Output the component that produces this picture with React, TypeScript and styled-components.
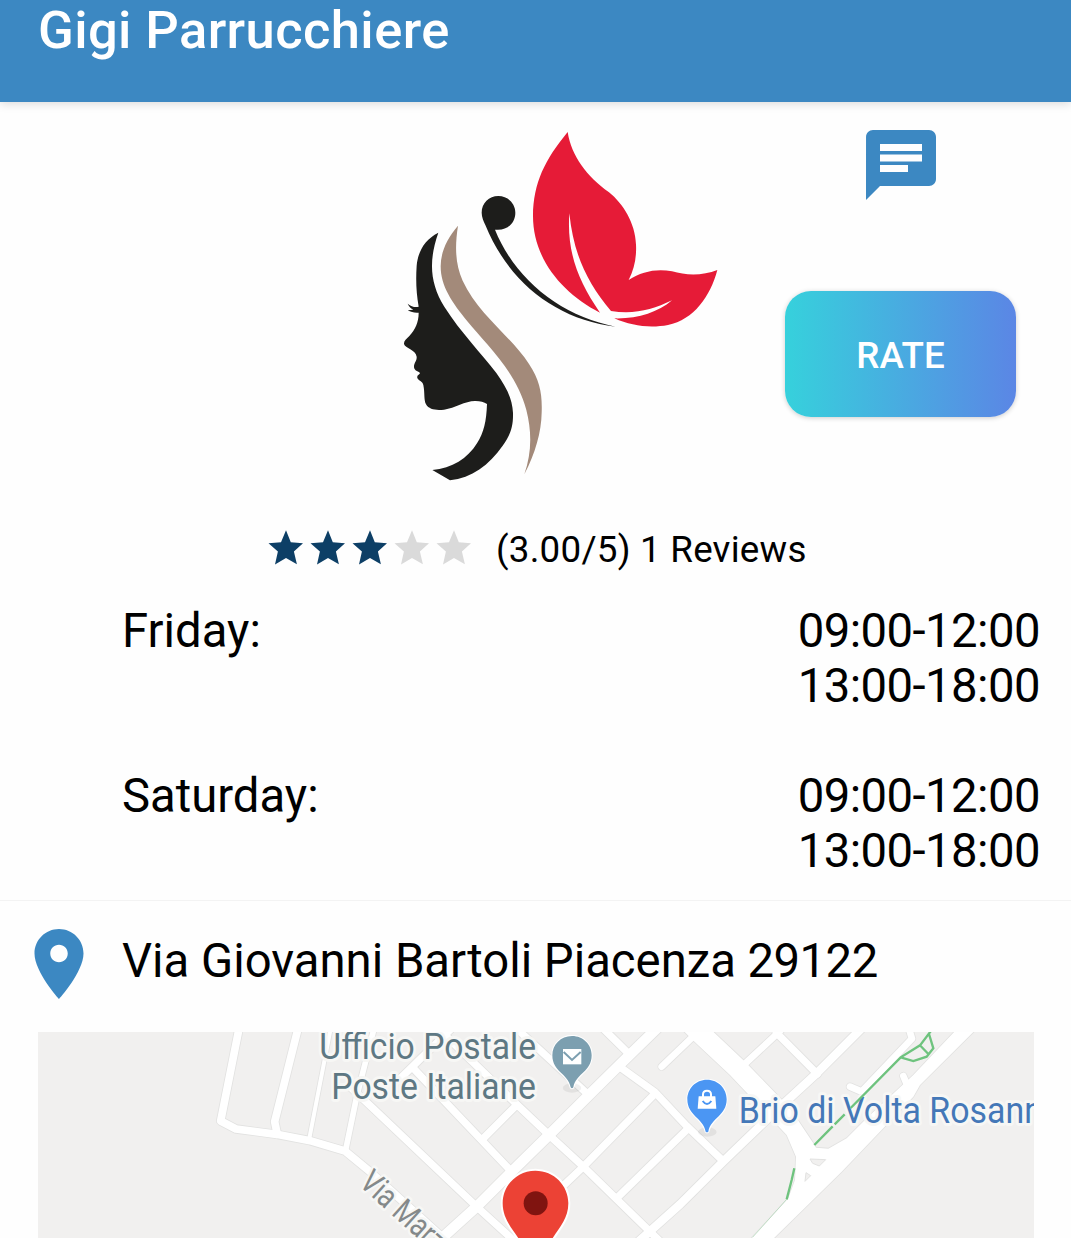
import React from "react";
import styled, { createGlobalStyle } from "styled-components";

const blue = "#3c88c2";

const GlobalStyle = createGlobalStyle`
  * { box-sizing: border-box; }
  body { margin: 0; background: #fefefe; font-family: Roboto, "Liberation Sans", sans-serif; color: #000; }
`;

const Screen = styled.div`
  width: 1071px;
  height: 1238px;
  overflow: hidden;
  display: flex;
  flex-direction: column;
`;

const AppBar = styled.header`
  flex: none;
  height: 102px;
  padding-left: 38px;
  background: ${blue};
  box-shadow: 0 2px 9px rgba(0, 0, 0, 0.14);
`;

const Title = styled.h1`
  margin: 0;
  font-size: 52.5px;
  font-weight: 500;
  line-height: 60px;
  letter-spacing: 0.4px;
  color: #fff;
`;

const Hero = styled.section`
  flex: none;
  height: 418px;
  padding: 18px 0 0 390px;
  display: flex;
  gap: 55px;
`;

const Logo = styled.svg`
  width: 340px;
  height: 370px;
`;

const Actions = styled.div`
  width: 231px;
  padding-top: 3px;
  display: flex;
  flex-direction: column;
  align-items: center;
  gap: 84px;
`;

const Icon = styled.svg`
  width: 84px;
  height: 84px;
  fill: ${blue};
`;

const RateButton = styled.button`
  width: 231px;
  height: 126px;
  border: 0;
  border-radius: 26px;
  padding: 2px 0 0;
  background: linear-gradient(90deg, #36d1dc, #5b86e5);
  box-shadow: 0 1px 5px rgba(0, 0, 0, 0.2);
  font: 500 36.75px Roboto, sans-serif;
  color: #fff;
`;

const Rating = styled.section`
  flex: none;
  height: 84px;
  padding: 9px 0 0 268px;
  display: flex;
  align-items: flex-start;
`;

const Stars = styled.div`
  display: flex;
  gap: 7px;
  padding-top: 1px;
  margin-right: 25px;
`;

const Star = styled.svg<{ $on: boolean }>`
  width: 35px;
  height: 35px;
  fill: ${(p) => (p.$on ? "#0d3f66" : "#dadada")};
`;

const Reviews = styled.span`
  font-size: 36.75px;
  line-height: 42px;
  letter-spacing: 0.23px;
`;

const Hours = styled.section`
  flex: none;
  height: 297px;
  padding: 0 31px 0 122px;
  border-bottom: 1px solid #f3f3f3;
`;

const Day = styled.div`
  height: 165px;
  display: flex;
  justify-content: space-between;
  font-size: 47.25px;
  line-height: 55px;
`;

const Slots = styled.div`
  text-align: right;
  letter-spacing: -0.55px;
`;

const Address = styled.section`
  flex: none;
  height: 131px;
  padding: 21px 0 0 17px;
  display: flex;
  gap: 21px;
  font-size: 47.25px;
  line-height: 78px;
`;

const PostCode = styled.span`
  letter-spacing: -0.55px;
`;

const MapView = styled.svg`
  flex: none;
  display: block;
  width: 996px;
  height: 206px;
  margin-left: 38px;
  background: #f1f0ef;
`;

const MapLabel = styled.text`
  font-family: Roboto, sans-serif;
  font-size: 109px;
  stroke: #f7f7f5;
  stroke-width: 18px;
  stroke-linejoin: round;
  paint-order: stroke;
`;

const roads: { d: string; w: number }[] = [
  { d: "M603 -10L548 267L594 291L716 307L816 326L921 357L996 419L1240 640", w: 23 },
  { d: "M780 -10L710 269L718 307", w: 23 },
  { d: "M878 -10L814 319", w: 12 },
  { d: "M1008 -10L956 194L924 349", w: 17 },
  { d: "M940 168L986 211L1316 524L1430 628", w: 22 },
  { d: "M1080 146L1240 -10", w: 22 },
  { d: "M1126 109L1416 414", w: 22 },
  { d: "M1201 -10L1436 217L1533 309L1636 404L1836 599L1866 628", w: 22 },
  { d: "M1336 319L1436 219", w: 22 },
  { d: "M1436 -10L1641 179", w: 22 },
  { d: "M1190 638L1316 524L1421 419L1533 309L1650 192L1746 97L1856 -10", w: 31 },
  { d: "M1696 -10L1771 64", w: 22 },
  { d: "M1751 109L1851 181L1946 282L2051 383", w: 22 },
  { d: "M1851 185L1636 404L1540 495", w: 22 },
  { d: "M1951 289L1741 494", w: 22 },
  { d: "M1800 630L1926 517L2056 388L2210 240L2336 124L2470 -10", w: 25 },
  { d: "M1871 104L1970 9", w: 20 },
  { d: "M2120 96L2221 2L2240 -18", w: 20 },
  { d: "M2215 2L2338 126", w: 22 },
  { d: "M2436 164L2471 179L2622 20L2614 -6", w: 20 },
  { d: "M2596 132L2616 180", w: 20 },
];

const junction =
  "M1930 -10H2016L2121 89L2256 229L2326 334L2334 347L2371 350L2426 319L2486 259L2626 129L2758 -10H2816L2646 159L2626 194L2411 419L2198 628H2132L2251 499L2271 444L2274 374L2246 309L2166 224L2076 129L1964 24Z";

const StreetMap = () => (
  <MapView viewBox="0 0 2988 618">
    <g fill="none" stroke="#e2e2e1" strokeLinecap="round" strokeLinejoin="round">
      {roads.map((r) => (
        <path key={r.d} d={r.d} strokeWidth={r.w + 5} />
      ))}
      <path d={junction} strokeWidth="5" />
    </g>
    <g fill="none" stroke="#fff" strokeLinecap="round" strokeLinejoin="round">
      {roads.map((r) => (
        <path key={r.d} d={r.d} strokeWidth={r.w} />
      ))}
    </g>
    <path d={junction} fill="#fff" />
    <path d="M2316 381L2363 383L2344 402L2324 394ZM2304 422L2318 431L2301 448Z" fill="#f1f0ef" stroke="#e2e2e1" strokeWidth="3" />

    <MapLabel x="844" y="82" fill="#5e7883" textLength="650" lengthAdjust="spacingAndGlyphs">Ufficio Postale</MapLabel>
    <MapLabel x="880" y="201" fill="#5e7883" textLength="614" lengthAdjust="spacingAndGlyphs">Poste Italiane</MapLabel>
    <MapLabel x="2102" y="273" fill="#4478b8" textLength="968" lengthAdjust="spacingAndGlyphs">Brio di Volta Rosanna</MapLabel>
    <MapLabel transform="translate(960 458) rotate(42) scale(.72 .9)" fill="#84898a">Via Marzabotto</MapLabel>

    <g fill="none" stroke="#6ec37e" strokeWidth="7">
      <path d="M2329 339L2384 283M2390 277L2420 247M2438 228L2588 76L2646 40L2678 -2M2588 76L2626 87L2666 74L2686 49L2673 6M2648 42L2674 69" />
      <path d="M2269 409L2261 444L2246 502" />
      <path d="M2246 502L2144 616" strokeWidth="2" opacity="0.5" />
    </g>

    <ellipse cx="1602" cy="168" rx="28" ry="14" fill="#000" opacity="0.06" />
    <path d="M1602 12C1568 12 1543 38 1543 70C1543 120 1590 124 1598 166Q1602 172 1606 166C1614 124 1661 120 1661 70C1661 38 1636 12 1602 12Z" fill="#7c9fb0" stroke="#fff" strokeWidth="6" paintOrder="stroke" />
    <path d="M1575 51H1630V97H1575Z" fill="#fff" />
    <path d="M1577 60L1602 84L1628 60" fill="none" stroke="#7c9fb0" strokeWidth="6" />

    <ellipse cx="2008" cy="300" rx="28" ry="14" fill="#000" opacity="0.06" />
    <path d="M2007 143C1973 143 1948 170 1948 202C1948 252 1995 257 2003 299Q2007 303 2011 299C2019 257 2066 252 2066 202C2066 170 2041 143 2007 143Z" fill="#4b96f3" stroke="#fff" strokeWidth="6" paintOrder="stroke" />
    <path d="M1982 193H2032L2035 230H1979Z" fill="#fff" />
    <path d="M1995 195V187Q1995 176 2007 176Q2019 176 2019 187V195" fill="none" stroke="#fff" strokeWidth="6" />
    <path d="M1994 207Q2007 225 2020 207" fill="none" stroke="#4b96f3" strokeWidth="6" />

    <path d="M1492 416C1437 416 1394 460 1394 514C1394 570 1435 600 1460 650H1525C1550 600 1591 570 1591 514C1591 460 1548 416 1492 416Z" fill="#ec4235" stroke="#fff" strokeWidth="12" paintOrder="stroke" />
    <circle cx="1493" cy="514" r="36" fill="#801410" />
  </MapView>
);

const SalonLogo = () => (
  <Logo viewBox="0 0 1020 1110">
    <g fill="#1d1d1b">
      <path d="M145 338C105 358 84 393 80 437C77 482 79 520 86 560C76 563 64 560 53 551C57 560 63 566 70 569L53 571C63 577 74 579 86 578C86 606 76 628 58 648C49 657 41 663 42 672C45 684 77 689 80 710C81 724 71 729 72 742C73 754 88 754 90 760C87 765 80 766 82 774C86 783 97 782 100 795C105 820 101 838 108 853C117 869 139 872 162 869C196 864 226 842 257 843C271 843 282 847 291 852C289 904 282 937 261 970C233 1015 186 1046 127 1050L180 1081C245 1073 297 1036 338 977C360 945 370 922 369 879C367 836 350 803 319 759C276 702 211 636 163 560C120 490 115 424 145 338Z" />
      <path d="M325 228C297 228 275 250 275 278C275 291 281 304 286 315C359 493 503 598 677 620C515 589 377 482 315 329C352 334 376 308 376 278C376 250 353 228 325 228Z" />
    </g>
    <path d="M204 317C170 357 152 397 152 439C152 500 187 548 232 604C285 670 378 752 409 870C426 937 425 999 403 1063C436 999 454 936 455 878C457 822 450 782 417 732C364 649 264 583 218 482C196 433 194 381 204 317Z" fill="#a38a7a" />
    <g fill="#e61b37">
      <path d="M533 36C465 119 430 188 429 288C429 417 517 520 630 578C566 484 530 400 538 280C551 405 592 488 663 573C733 584 788 569 846 541C803 578 742 597 673 595C724 618 781 625 834 615C912 599 961 529 982 450C940 467 889 467 846 454C800 445 756 454 716 480C733 447 740 412 738 374C736 309 699 251 657 217C590 169 544 107 533 36Z" />
    </g>
  </Logo>
);

const days = ["Friday:", "Saturday:"];

export default function App() {
  return (
    <Screen>
      <GlobalStyle />
      <AppBar>
        <Title>Gigi Parrucchiere</Title>
      </AppBar>
      <Hero>
        <SalonLogo />
        <Actions>
          <Icon viewBox="0 0 24 24">
            <path d="M20 2H4c-1.1 0-1.99.9-1.99 2L2 22l4-4h14c1.1 0 2-.9 2-2V4c0-1.1-.9-2-2-2zM6 9h12v2H6V9zm8 5H6v-2h8v2zm4-6H6V6h12v2z" />
          </Icon>
          <RateButton>RATE</RateButton>
        </Actions>
      </Hero>
      <Rating>
        <Stars>
          {[1, 2, 3, 4, 5].map((n) => (
            <Star key={n} $on={n <= 3} viewBox="0 0 35 35">
              <path d="M18 0.3L22.8 12.2L35 13.2L25.9 21.4L28.9 34.3L18 28L7 34.5L9.9 21.4L0.5 13.2L13 12.2Z" />
            </Star>
          ))}
        </Stars>
        <Reviews>(3.00/5) 1 Reviews</Reviews>
      </Rating>
      <Hours>
        {days.map((day) => (
          <Day key={day}>
            <span>{day}</span>
            <Slots>
              <div>09:00-12:00</div>
              <div>13:00-18:00</div>
            </Slots>
          </Day>
        ))}
      </Hours>
      <Address>
        <Icon viewBox="0 0 24 24">
          <path d="M12 2C8.13 2 5 5.13 5 9c0 5.25 7 13 7 13s7-7.75 7-13c0-3.87-3.13-7-7-7zm0 9.5c-1.38 0-2.5-1.12-2.5-2.5s1.12-2.5 2.5-2.5 2.5 1.12 2.5 2.5-1.12 2.5-2.5 2.5z" />
        </Icon>
        <span>
          Via Giovanni Bartoli Piacenza <PostCode>29122</PostCode>
        </span>
      </Address>
      <StreetMap />
    </Screen>
  );
}
